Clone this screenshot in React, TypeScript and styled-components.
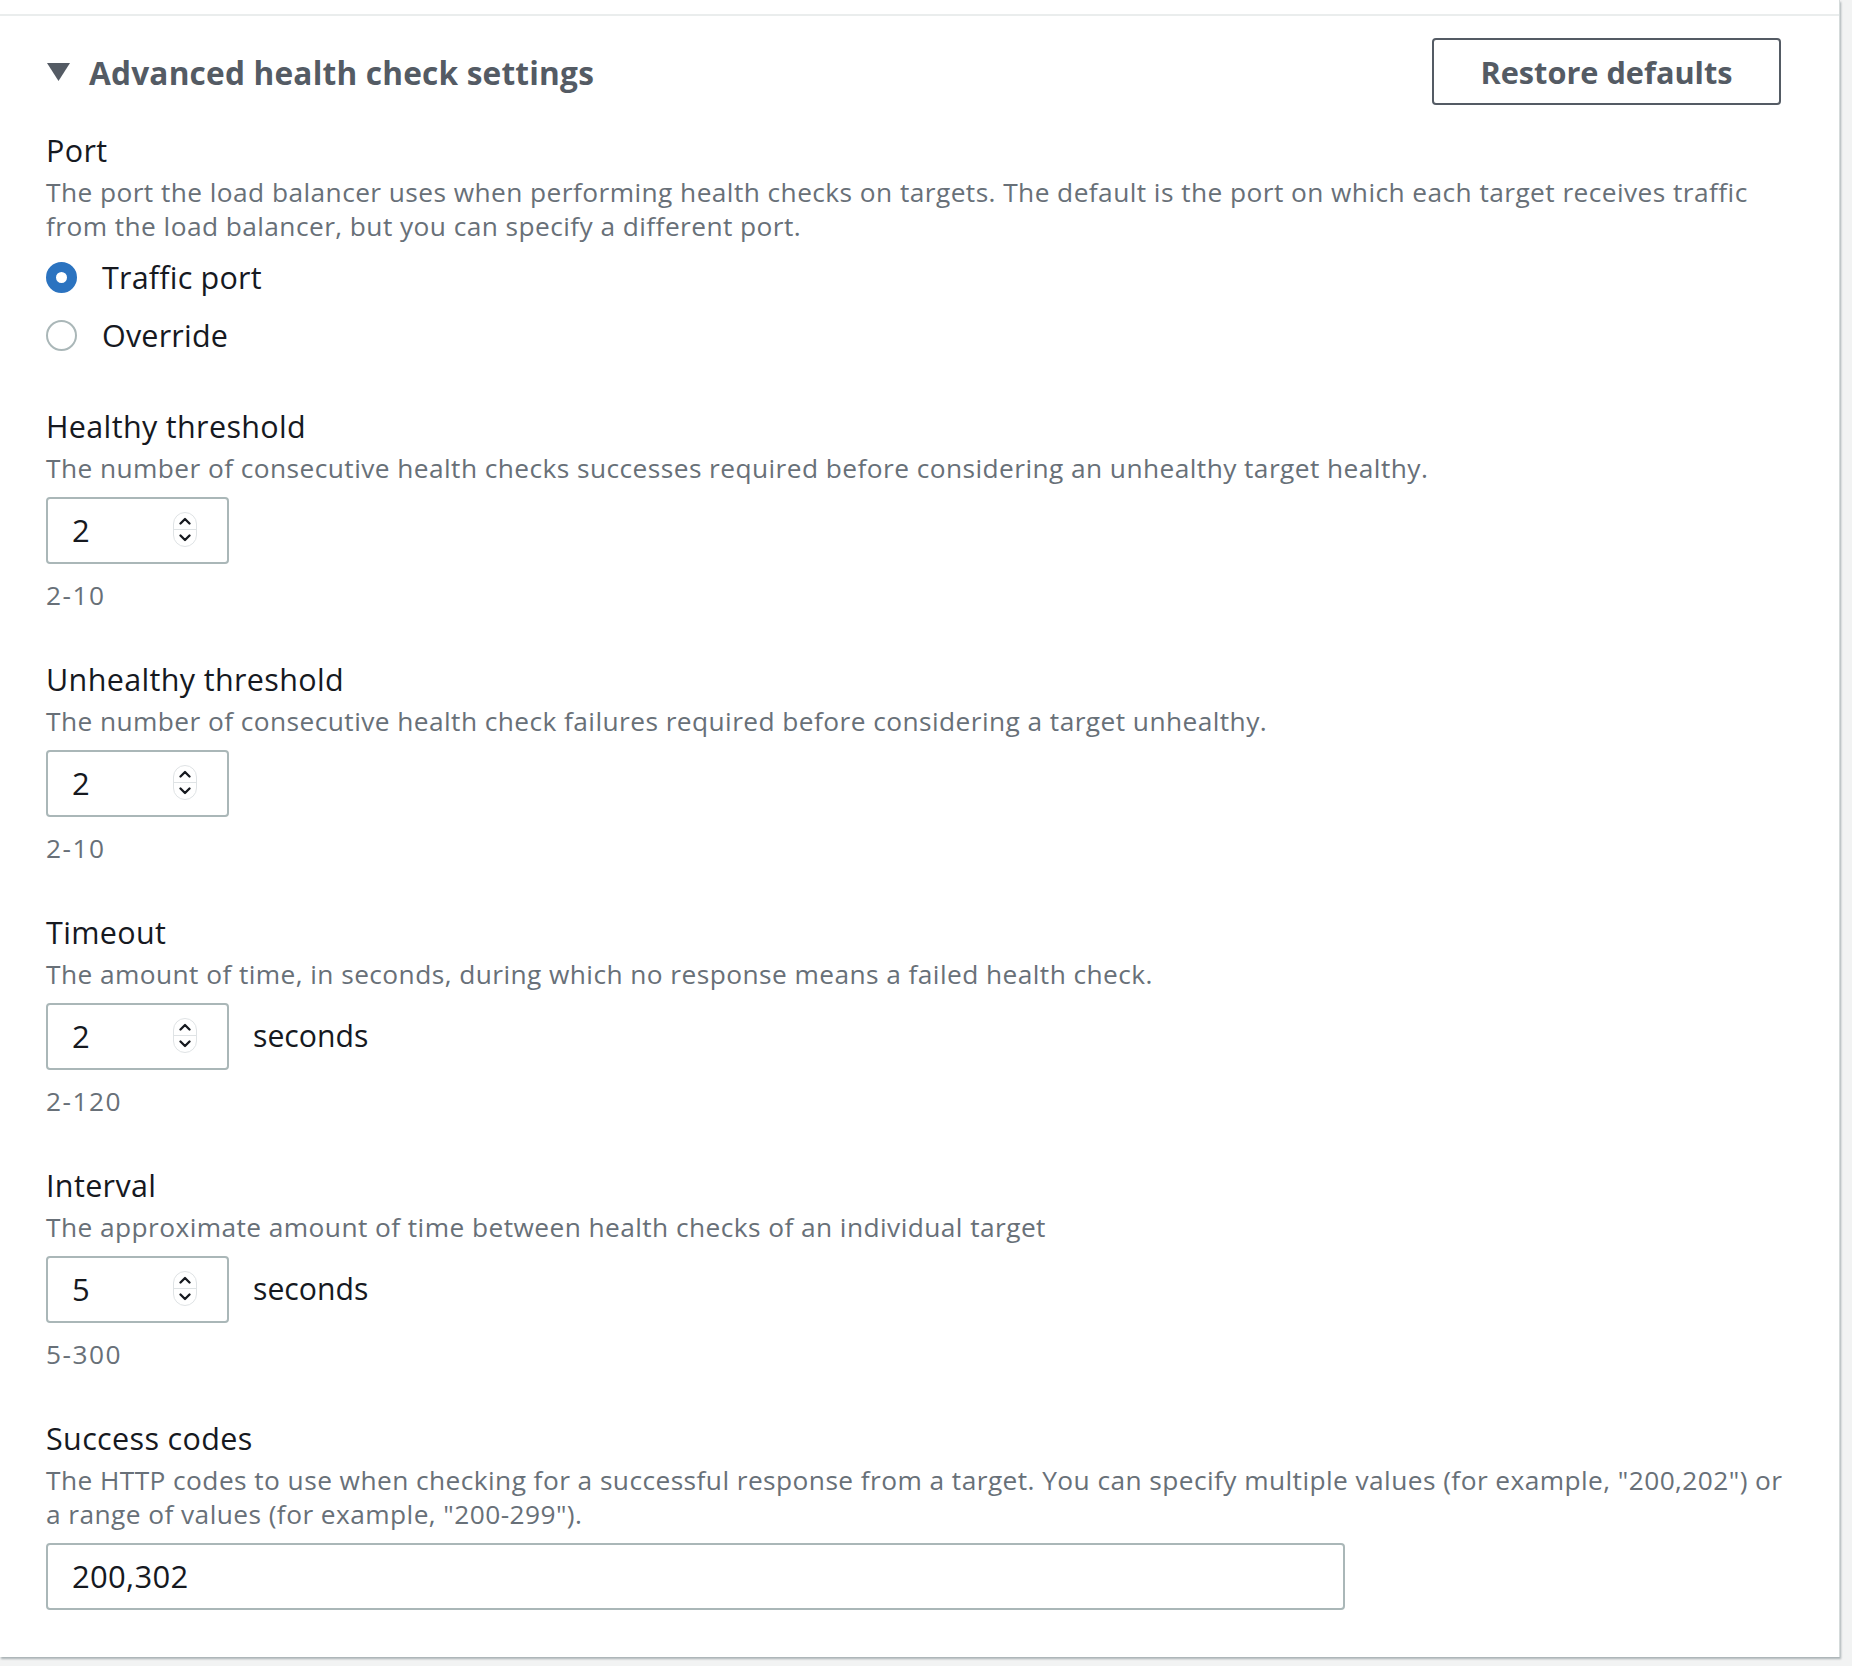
import React from 'react';
import styled, { createGlobalStyle } from 'styled-components';

const Global = createGlobalStyle`
  html, body { margin: 0; padding: 0; background: #f2f3f3; }
  body { font-family: "Open Sans", "Noto Sans", sans-serif; -webkit-font-smoothing: antialiased; }
`;

const Page = styled.div`
  width: 1852px;
  height: 1666px;
  background: #f2f3f3;
  overflow: hidden;
`;

const Card = styled.section`
  width: 1840px;
  height: 1657px;
  box-sizing: border-box;
  background: #ffffff;
  border-right: 1px solid #d5dbdb;
  box-shadow: 1px 2px 2px 0 rgba(0, 28, 36, 0.3);
`;

const TopRule = styled.div`
  height: 14px;
  border-bottom: 2px solid #eaeded;
`;

const Body = styled.div`
  padding: 22px 20px 0 46px;
  display: flex;
  flex-direction: column;
`;

const HeaderRow = styled.div`
  display: flex;
  align-items: center;
  justify-content: space-between;
  height: 67px;
  margin-right: 38px;
`;

const Heading = styled.h2`
  margin: 0;
  display: flex;
  align-items: center;
  gap: 19px;
  font-size: 31.6px;
  font-weight: 700;
  letter-spacing: 0.2px;
  color: #545b64;
  line-height: 44px;
  margin-top: 2px;
`;

const Caret = styled.svg`
  width: 23px;
  height: 18px;
  flex: none;
  margin-left: 1px;
  margin-top: -2px;
`;

const OutlineButton = styled.button`
  width: 349px;
  height: 67px;
  box-sizing: border-box;
  border: 2px solid #545b64;
  border-radius: 4px;
  background: #fff;
  color: #545b64;
  font-family: inherit;
  font-size: 30.7px;
  font-weight: 700;
  padding: 0;
`;

const Fields = styled.div`
  display: flex;
  flex-direction: column;
  gap: 46px;
  margin-top: 24px;
`;

const Field = styled.div`
  display: flex;
  flex-direction: column;
`;

const Label = styled.div`
  font-size: 30.5px;
  line-height: 42px;
  letter-spacing: 0.35px;
  color: #16191f;
`;

const Description = styled.div`
  margin-top: 4px;
  font-size: 26.3px;
  line-height: 34px;
  letter-spacing: 0.43px;
  color: #687078;
`;

const Hint = styled.div`
  margin-top: 14px;
  font-size: 26.3px;
  line-height: 34px;
  letter-spacing: 1.5px;
  color: #687078;
`;

const RadioGroup = styled.div`
  margin-top: 13px;
  margin-bottom: 3px;
  display: flex;
  flex-direction: column;
  gap: 16px;
`;

const RadioRow = styled.label`
  display: flex;
  align-items: center;
  gap: 25px;
  height: 42px;
  font-size: 30.5px;
  letter-spacing: 0.2px;
  color: #16191f;
`;

const RadioDot = styled.span<{ $checked?: boolean }>`
  width: 31px;
  height: 31px;
  box-sizing: border-box;
  border-radius: 50%;
  flex: none;
  background: #fff;
  border: ${(p) => (p.$checked ? '10px solid #2b73c0' : '2.5px solid #aab7b8')};
`;

const InputRow = styled.div`
  margin-top: 12px;
  display: flex;
  align-items: center;
  gap: 24px;
`;

const Box = styled.div<{ $width: number }>`
  width: ${(p) => p.$width}px;
  height: 67px;
  box-sizing: border-box;
  border: 2px solid #aab7b8;
  border-radius: 4px;
  display: flex;
  align-items: center;
  padding-left: 24px;
  padding-right: 30px;
  font-size: 31px;
  letter-spacing: 0.3px;
  color: #16191f;
`;

const Value = styled.span`
  flex: 1;
  margin-top: -2px;
`;

const Spinner = styled.span`
  width: 24px;
  height: 35px;
  box-sizing: border-box;
  border: 1px solid #dfe3e5;
  border-radius: 12px;
  display: flex;
  flex-direction: column;
  align-items: center;
  overflow: hidden;
  margin-top: -2px;
`;

const SpinHalf = styled.span<{ $top?: boolean }>`
  flex: 1;
  width: 100%;
  display: flex;
  align-items: center;
  justify-content: center;
  border-bottom: ${(p) => (p.$top ? '1px solid #dfe3e5' : 'none')};
`;

const Unit = styled.span`
  font-size: 30.2px;
  color: #16191f;
  margin-top: -2px;
`;

const Chevron = ({ up }: { up?: boolean }) => (
  <svg width="12" height="8" viewBox="0 0 12 8">
    <path
      d={up ? 'M1.5 6.5 L6 2 L10.5 6.5' : 'M1.5 1.5 L6 6 L10.5 1.5'}
      fill="none"
      stroke="#16191f"
      strokeWidth="2.3"
      strokeLinecap="round"
      strokeLinejoin="round"
    />
  </svg>
);

const NumberInput = ({ value }: { value: string }) => (
  <Box $width={183}>
    <Value>{value}</Value>
    <Spinner>
      <SpinHalf $top>
        <Chevron up />
      </SpinHalf>
      <SpinHalf>
        <Chevron />
      </SpinHalf>
    </Spinner>
  </Box>
);

type NumField = {
  label: string;
  description: string;
  value: string;
  hint: string;
  unit?: string;
};

const numberFields: NumField[] = [
  {
    label: 'Healthy threshold',
    description:
      'The number of consecutive health checks successes required before considering an unhealthy target healthy.',
    value: '2',
    hint: '2-10',
  },
  {
    label: 'Unhealthy threshold',
    description:
      'The number of consecutive health check failures required before considering a target unhealthy.',
    value: '2',
    hint: '2-10',
  },
  {
    label: 'Timeout',
    description: 'The amount of time, in seconds, during which no response means a failed health check.',
    value: '2',
    hint: '2-120',
    unit: 'seconds',
  },
  {
    label: 'Interval',
    description: 'The approximate amount of time between health checks of an individual target',
    value: '5',
    hint: '5-300',
    unit: 'seconds',
  },
];

export default function App() {
  return (
    <Page>
      <Global />
      <Card>
        <TopRule />
        <Body>
          <HeaderRow>
            <Heading>
              <Caret viewBox="0 0 23 18">
                <polygon points="0,0 23,0 11.5,18" fill="#545b64" />
              </Caret>
              Advanced health check settings
            </Heading>
            <OutlineButton>Restore defaults</OutlineButton>
          </HeaderRow>
          <Fields>
            <Field>
              <Label>Port</Label>
              <Description>
                The port the load balancer uses when performing health checks on targets. The default is the port on
                which each target receives traffic
                <br />
                from the load balancer, but you can specify a different port.
              </Description>
              <RadioGroup>
                <RadioRow>
                  <RadioDot $checked />
                  Traffic port
                </RadioRow>
                <RadioRow>
                  <RadioDot />
                  Override
                </RadioRow>
              </RadioGroup>
            </Field>
            {numberFields.map((f) => (
              <Field key={f.label}>
                <Label>{f.label}</Label>
                <Description>{f.description}</Description>
                <InputRow>
                  <NumberInput value={f.value} />
                  {f.unit && <Unit>{f.unit}</Unit>}
                </InputRow>
                <Hint>{f.hint}</Hint>
              </Field>
            ))}
            <Field>
              <Label>Success codes</Label>
              <Description>
                The HTTP codes to use when checking for a successful response from a target. You can specify multiple
                values (for example, "200,202") or
                <br />
                a range of values (for example, "200-299").
              </Description>
              <InputRow>
                <Box $width={1299}>
                  <Value>200,302</Value>
                </Box>
              </InputRow>
            </Field>
          </Fields>
        </Body>
      </Card>
    </Page>
  );
}
